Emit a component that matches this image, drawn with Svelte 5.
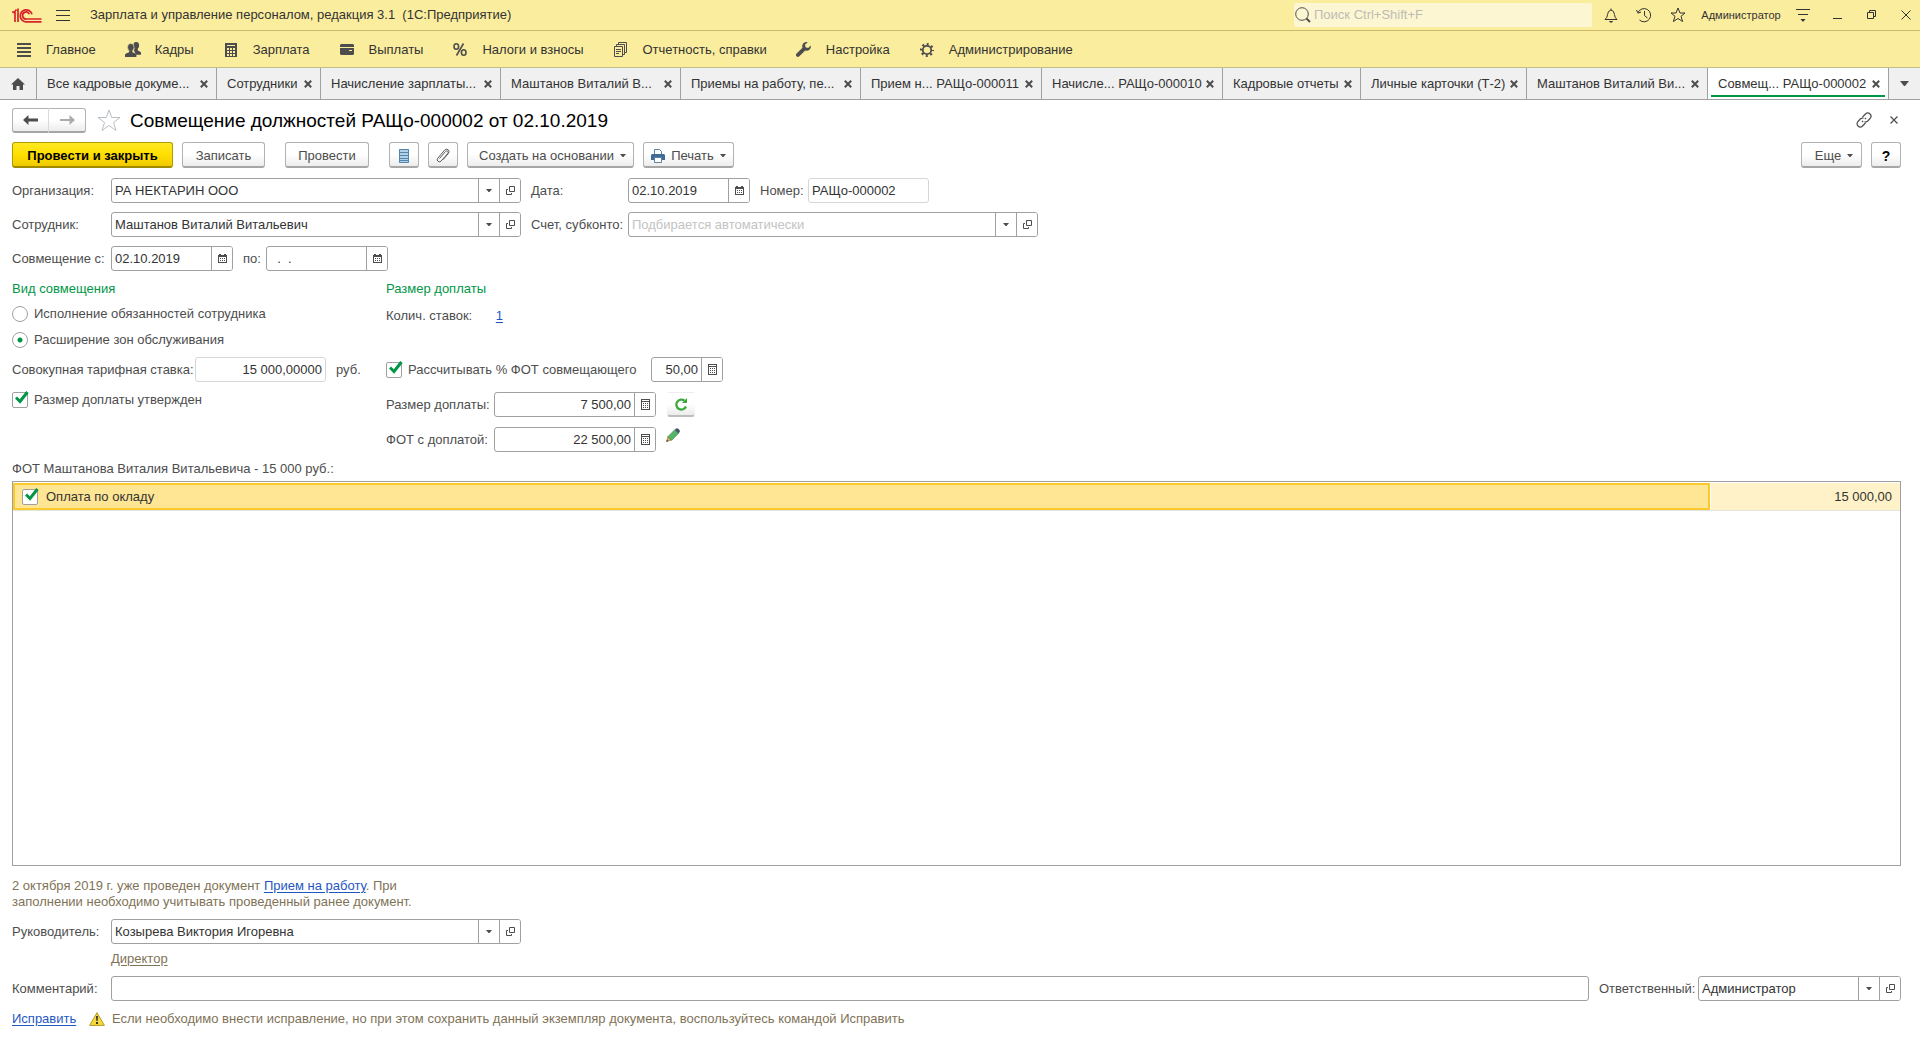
<script>
  const sections = [
    { icon: 'lines', title: 'Главное' },
    { icon: 'people', title: 'Кадры' },
    { icon: 'calcDark', title: 'Зарплата' },
    { icon: 'card', title: 'Выплаты' },
    { icon: 'percent', title: 'Налоги и взносы' },
    { icon: 'docs', title: 'Отчетность, справки' },
    { icon: 'wrench', title: 'Настройка' },
    { icon: 'gear', title: 'Администрирование' }
  ];

  const tabs = [
    { title: 'Все кадровые докуме...', width: 180 },
    { title: 'Сотрудники', width: 104 },
    { title: 'Начисление зарплаты...', width: 180 },
    { title: 'Маштанов Виталий В...', width: 180 },
    { title: 'Приемы на работу, пе...', width: 180 },
    { title: 'Прием н... РАЩо-000011', width: 181 },
    { title: 'Начисле... РАЩо-000010', width: 181 },
    { title: 'Кадровые отчеты', width: 138 },
    { title: 'Личные карточки (Т-2)', width: 166 },
    { title: 'Маштанов Виталий Ви...', width: 181 },
    { title: 'Совмещ... РАЩо-000002', width: 181, active: true }
  ];

  let kind = $state('zones');
  let approved = $state(true);
  let calcPercent = $state(true);
  let salaryRow = $state(true);
</script>

{#snippet icon(name)}
  {#if name === 'lines'}
    <svg width="14" height="14" viewBox="0 0 14 14" fill="#4d4d4d"><path d="M0 0h14v2H0zM0 4h14v2H0zM0 8h14v2H0zM0 12h14v2H0z" /></svg>
  {:else if name === 'people'}
    <svg width="16" height="15" viewBox="0 0 16 15" fill="#4d4d4d"><ellipse cx="11.200" cy="3.400" rx="2.900" ry="3.400" /><path d="M9.800 5.500h3v3l2.500 1.300q.7.400.7 1.300v1.700h-5l-2-4z" /><ellipse cx="5.800" cy="5.300" rx="3.300" ry="3.900" stroke="#fbed9e" stroke-width=".6" /><path d="M4.200 8.300h3.200v1.900l3 1.300q1 .5 1 1.500v2H0v-2q0-1 1-1.500l3.200-1.300z" /></svg>
  {:else if name === 'calcDark'}
    <svg width="12" height="14" viewBox="0 0 12 14"><path fill="#4d4d4d" d="M0 0h12v14H0z" /><path fill="#fbed9e" d="M2 2h8v1H2zM2 5h2v2H2zM5 5h2v2H5zM8 5h2v2H8zM2 8h2v2H2zM5 8h2v2H5zM8 8h2v2H8zM2 11h2v2H2zM5 11h2v2H5zM8 11h2v2H8z" /></svg>
  {:else if name === 'card'}
    <svg width="14" height="11" viewBox="0 0 14 11"><path fill="#4d4d4d" d="M1 0h12l1 1v2H0V1zM0 4h14v6l-1 1H1l-1-1z" /><path fill="#fbed9e" d="M9 6h3v1H9z" /></svg>
  {:else if name === 'percent'}
    <svg width="14" height="13" viewBox="0 0 14 13" fill="none" stroke="#4d4d4d" stroke-width="1.600"><ellipse cx="3.300" cy="3.500" rx="2.300" ry="2.700" /><ellipse cx="10.700" cy="9.500" rx="2.300" ry="2.700" /><path d="M10.500.5l-7 12" /></svg>
  {:else if name === 'docs'}
    <svg width="13" height="15" viewBox="0 0 13 15" fill="none" stroke="#4d4d4d"><path d="M4.500 2.500v-2h8v10h-2M2.500 4.500v-2h8v10h-2M.5 4.500h8v10h-8zM2 7.500h5M2 9.500h5M2 11.500h3" /></svg>
  {:else if name === 'wrench'}
    <svg width="15" height="15" viewBox="0 0 15 15"><path fill="#4d4d4d" d="M10.500 0a4.200 4.200 0 0 0-4 5.700L.6 11.500a1.800 1.800 0 0 0 2.700 2.800L9.200 8.500A4.200 4.200 0 0 0 14.700 3.500L12.200 6 9.500 5.300 9 2.800 11.700.2z" /></svg>
  {:else if name === 'gear'}
    <svg width="14" height="14" viewBox="0 0 14 14" fill="none" stroke="#4d4d4d"><circle cx="7" cy="7" r="4.200" stroke-width="1.800" /><circle cx="7" cy="7" r="5.800" stroke-width="2.400" stroke-dasharray="2 2.555" stroke-dashoffset="1" /></svg>
  {:else if name === 'caret'}
    <svg width="6" height="3" viewBox="0 0 6 3"><path fill="#4d4d4d" d="M0 0h6L3.500 3h-1z" /></svg>
  {:else if name === 'open'}
    <svg width="9" height="9" viewBox="0 0 9 9" fill="none" stroke="#4d4d4d"><path d="M3.500.5h5v5h-5zM2 3.500H.5v5h5V7" /></svg>
  {:else if name === 'calendar'}
    <svg width="9" height="9" viewBox="0 0 9 9"><path fill="#4d4d4d" d="M0 1h1V0h2v1h3V0h2v1h1v8H0z" /><path fill="#fff" d="M1 3h7v5H1z" /><path fill="#4d4d4d" d="M2 4h1v1H2zM4 4h1v1H4zM6 4h1v1H6zM2 6h1v1H2zM4 6h1v1H4zM6 6h1v1H6z" /></svg>
  {:else if name === 'calc'}
    <svg width="9" height="11" viewBox="0 0 9 11"><path fill="#4d4d4d" d="M0 0h9v11H0z" /><path fill="#fff" d="M1 1h7v1H1zM1 3h7v7H1z" /><path fill="#4d4d4d" d="M2 4h1v1H2zM4 4h1v1H4zM6 4h1v1H6zM2 6h1v1H2zM4 6h1v1H4zM6 6h1v1H6zM2 8h1v1H2zM4 8h1v1H4zM6 8h1v1H6z" /></svg>
  {:else if name === 'cross'}
    <svg width="8" height="8" viewBox="0 0 8 8" fill="none" stroke="#4d4d4d" stroke-width="2"><path d="M.8.8l6.400 6.400M7.200.8L.8 7.200" /></svg>
  {/if}
{/snippet}

{#snippet field(id, value, buttons, cls = '', placeholder = '')}
  <div class="field {cls}">
    <input type="text" {id} {value} {placeholder} readonly={cls.includes('readonly')} />
    {#each buttons as b}
      <button type="button" aria-label={b}>{@render icon(b)}</button>
    {/each}
  </div>
{/snippet}

{#snippet tick()}
  <svg class="tick" width="14" height="13" viewBox="0 0 14 13" fill="none" stroke="#009646" stroke-width="3"><path d="M1 6.500l4 4L12.500 1" /></svg>
{/snippet}

<div class="app">
  <header class="titlebar">
    <svg class="logo" width="30" height="15" viewBox="0 0 30 15" fill="none" stroke="#d8232a" stroke-width="1.700"><path d="M0 4h2.500L4.500 1.500M1 4.500h2V14M6 .5V14" /><path d="M20 6.200A6 6 0 1 0 14.500 13.800H29.500" /><path d="M17.300 6.200A3.500 3.500 0 1 0 14.500 11H29.500" /></svg>
    <button type="button" class="plain burger" aria-label="Меню"><svg width="14" height="11" viewBox="0 0 14 11" stroke="#333"><path d="M0 .5h14M0 5.500h14M0 10.500h14" /></svg></button>
    <span class="app-name">Зарплата и управление персоналом, редакция 3.1&nbsp; (1С:Предприятие)</span>
    <label class="search">
      <svg width="16" height="16" viewBox="0 0 16 16" fill="none" stroke="#4d4d4d"><circle cx="7" cy="7" r="6.300" /><path d="M11.500 11.500l3.500 3.500" stroke-width="2" /></svg>
      <input type="search" placeholder="Поиск Ctrl+Shift+F" aria-label="Поиск" />
    </label>
    <div class="tools">
      <button type="button" class="plain" aria-label="Оповещения"><svg width="14" height="15" viewBox="0 0 14 15" fill="none" stroke="#333"><path d="M7 .5v1.500M1 11.500Q3.500 9.500 3.500 6.500 4 2.500 7 2q3 .5 3.500 4.500 0 3 2.500 5z" /><path d="M5 13h4l-1 1.500H6z" fill="#333" stroke="none" /></svg></button>
      <button type="button" class="plain" aria-label="История"><svg width="16" height="16" viewBox="0 0 16 16" fill="none" stroke="#333"><path d="M2 5.500A6.600 6.600 0 1 1 3.500 13M.5 3l1.500 3.200L5 5M8.500 4v4.500l3 2.500" /></svg></button>
      <button type="button" class="plain" aria-label="Избранное"><svg width="16" height="16" viewBox="0 0 16 16" fill="none" stroke="#333"><path d="M8 1l2 5h5l-4 3.300 1.600 5.200L8 11.500l-4.600 3L5 9.300 1 6h5z" /></svg></button>
      <button type="button" class="plain user">Администратор</button>
      <button type="button" class="plain" aria-label="Сервис"><svg width="14" height="13" viewBox="0 0 14 13"><path d="M0 .5h14M2 5.500h10" stroke="#333" /><path d="M4.500 10h5L7.500 12.500h-1z" fill="#333" /></svg></button>
    </div>
    <div class="window">
      <button type="button" class="plain" aria-label="Свернуть"><svg width="10" height="10" viewBox="0 0 10 10"><path d="M0 8.500h9" stroke="#333" /></svg></button>
      <button type="button" class="plain" aria-label="Развернуть"><svg width="10" height="10" viewBox="0 0 10 10" fill="none" stroke="#333"><path d="M2.500 2.500v-2h6v6h-2M.5 2.500h6v6h-6z" /></svg></button>
      <button type="button" class="plain" aria-label="Закрыть"><svg width="10" height="10" viewBox="0 0 10 10" fill="none" stroke="#333"><path d="M.5.5l9 9M9.500.5l-9 9" /></svg></button>
    </div>
  </header>

  <nav class="sections">
    {#each sections as s}
      <a href="#section"><span class="section-icon">{@render icon(s.icon)}</span>{s.title}</a>
    {/each}
  </nav>

  <div class="tabs">
    <button type="button" class="plain home" aria-label="Начальная страница"><svg width="14" height="12" viewBox="0 0 14 12" fill="#4d4d4d"><path d="M7 0l7 6.500h-2V12H8.500V8h-3v4H2V6.500H0z" /></svg></button>
    {#each tabs as t}
      <div class="tab" class:active={t.active} style="flex-basis: {t.width}px">
        <a href="#tab">{t.title}</a>
        <button type="button" class="plain" aria-label="Закрыть вкладку">{@render icon('cross')}</button>
      </div>
    {/each}
    <button type="button" class="plain all-tabs" aria-label="Все вкладки"><svg width="9" height="5" viewBox="0 0 9 5"><path fill="#4d4d4d" d="M0 0h9L5 5H4z" /></svg></button>
  </div>

  <main>
    <div class="heading">
      <div class="history">
        <button type="button" aria-label="Назад"><svg width="15" height="10" viewBox="0 0 15 10" fill="#4d4d4d"><path d="M0 5l5.500-5v3.500H15v3H5.500V10z" /></svg></button>
        <button type="button" aria-label="Вперед"><svg width="15" height="10" viewBox="0 0 15 10" fill="#ababab"><path d="M15 5L9.500 0v4H0v2h9.500v4z" /></svg></button>
      </div>
      <button type="button" class="plain star" aria-label="В избранное"><svg width="24" height="22" viewBox="0 0 24 22" fill="none" stroke="#b9bec4"><path d="M12 1l2.700 7.500H23l-6.500 5 2.500 8-7-5-7 5 2.500-8L1 8.500h8.300z" /></svg></button>
      <h1>Совмещение должностей РАЩо-000002 от 02.10.2019</h1>
      <button type="button" class="plain link" aria-label="Получить ссылку"><svg width="16" height="16" viewBox="0 0 16 16" fill="none" stroke="#4d4d4d" stroke-width="1.200"><path d="M6.500 5L9.500 2a3.100 3.100 0 0 1 4.500 4.500L11.500 9.200Q10 10.300 8.500 9.800M9.500 11L6.500 14A3.100 3.100 0 0 1 2 9.500L4.500 6.800Q6 5.700 7.500 6.200M6 10l1.200-1.200M8.800 7.200L10 6" /></svg></button>
      <button type="button" class="plain close" aria-label="Закрыть"><svg width="8" height="8" viewBox="0 0 8 8" fill="none" stroke="#4d4d4d" stroke-width="1.200"><path d="M.5.5l7 7M7.500.5l-7 7" /></svg></button>
    </div>

    <div class="toolbar">
      <button type="button" class="btn primary">Провести и закрыть</button>
      <button type="button" class="btn save">Записать</button>
      <button type="button" class="btn post">Провести</button>
      <button type="button" class="btn square" aria-label="Движения документа"><svg width="10" height="14" viewBox="0 0 10 14"><path fill="#b4d0e6" d="M0 0h10v14H0z" /><path d="M.5.5h9v13h-9zM1 3.500h8M1 6.500h8M1 9.500h8M1 11.500h8" fill="none" stroke="#5685ab" /></svg></button>
      <button type="button" class="btn square clip" aria-label="Присоединенные файлы"><svg width="14" height="15" viewBox="0 0 14 15" fill="none" stroke="#5c5c5c"><path d="M3.500 10.500l6-7q1.200-1.200 2.200-.3t0 2.300l-6.700 7.700q-1.500 1.300-3 .1t-.3-3L8.500 2.200q1.800-1.800 3.700-.4 1.700 1.600.2 3.700L7 11.700" /></svg></button>
      <button type="button" class="btn create">Создать на основании {@render icon('caret')}</button>
      <button type="button" class="btn print"><svg width="14" height="14" viewBox="0 0 14 14"><path d="M3.500 5V.5h5l2 2V5" fill="#fff" stroke="#5f7f9e" /><path d="M1 5h12l1 1v5H0V6z" fill="#3f6c97" /><path d="M3.500 8.500h7v5h-7z" fill="#fff" stroke="#5f7f9e" /></svg>Печать {@render icon('caret')}</button>
      <button type="button" class="btn more">Еще {@render icon('caret')}</button>
      <button type="button" class="btn square help">?</button>
    </div>

    <div class="rows">
      <div class="row">
        <label class="caption" for="org">Организация:</label>
        {@render field('org', 'РА НЕКТАРИН ООО', ['caret', 'open'], 'wide')}
        <label class="caption second" for="date">Дата:</label>
        {@render field('date', '02.10.2019', ['calendar'], 'date')}
        <label class="number" for="num">Номер:</label>
        {@render field('num', 'РАЩо-000002', [], 'readonly doc-number')}
      </div>
      <div class="row">
        <label class="caption" for="emp">Сотрудник:</label>
        {@render field('emp', 'Маштанов Виталий Витальевич', ['caret', 'open'], 'wide')}
        <label class="caption second" for="acc">Счет, субконто:</label>
        {@render field('acc', '', ['caret', 'open'], 'wide', 'Подбирается автоматически')}
      </div>
      <div class="row">
        <label class="caption" for="from">Совмещение с:</label>
        {@render field('from', '02.10.2019', ['calendar'], 'date')}
        <label class="until" for="to">по:</label>
        {@render field('to', '\u00a0\u00a0.\u00a0\u00a0.', ['calendar'], 'date')}
      </div>
    </div>

    <div class="columns">
      <section class="kind">
        <h2>Вид совмещения</h2>
        <div class="radios">
          <label><input type="radio" name="kind" value="duties" bind:group={kind} />Исполнение обязанностей сотрудника</label>
          <label><input type="radio" name="kind" value="zones" bind:group={kind} />Расширение зон обслуживания</label>
        </div>
        <div class="row">
          <label class="rate" for="rate">Совокупная тарифная ставка:</label>
          {@render field('rate', '15 000,00000', [], 'readonly numeric rate-value')}
          <span class="unit">руб.</span>
        </div>
        <label class="check approved"><span class="box"><input type="checkbox" bind:checked={approved} />{#if approved}{@render tick()}{/if}</span>Размер доплаты утвержден</label>
      </section>

      <section class="amount">
        <h2>Размер доплаты</h2>
        <p class="count">Колич. ставок: <a href="#count">1</a></p>
        <div class="row">
          <label class="check percent"><span class="box"><input type="checkbox" bind:checked={calcPercent} />{#if calcPercent}{@render tick()}{/if}</span>Рассчитывать % ФОТ совмещающего</label>
          {@render field('percent', '50,00', ['calc'], 'numeric short')}
        </div>
        <div class="row">
          <label class="sum" for="sum">Размер доплаты:</label>
          {@render field('sum', '7 500,00', ['calc'], 'numeric money')}
          <button type="button" class="refresh" aria-label="Пересчитать"><svg width="13" height="13" viewBox="0 0 13 13"><path d="M11 8.500A5 5 0 1 1 9.500 2.700" fill="none" stroke="#38a838" stroke-width="2.200" /><path d="M12 0v5H7z" fill="#38a838" /></svg></button>
        </div>
        <div class="row">
          <label class="sum" for="total">ФОТ с доплатой:</label>
          {@render field('total', '22 500,00', ['calc'], 'numeric money')}
          <button type="button" class="plain edit" aria-label="Изменить"><svg width="14" height="14" viewBox="0 0 14 14"><path d="M.5 13.500L2 8.500l3.500 3.500z" fill="#e9a94b" stroke="#8a6a3d" stroke-width=".6" /><path d="M1.800 8.700l7-7 3.700 3.700-7 7z" fill="#54b365" stroke="#3d8b4c" stroke-width=".6" /><path d="M8.800 1.700l1.300-1.300Q11.300-.2 12.800 1.200T13.700 4.100L12.400 5.400z" fill="#44546a" /><path d="M.3 13.700l.7-2 1.400 1.300z" fill="#333" /></svg></button>
        </div>
      </section>
    </div>

    <p class="table-title">ФОТ Маштанова Виталия Витальевича - 15 000 руб.:</p>
    <div class="grid">
      <table>
        <tbody>
          <tr>
            <td class="current"><label class="check"><span class="box"><input type="checkbox" bind:checked={salaryRow} />{#if salaryRow}{@render tick()}{/if}</span>Оплата по окладу</label></td>
            <td class="value">15 000,00</td>
          </tr>
        </tbody>
      </table>
    </div>

    <p class="note">2 октября 2019 г. уже проведен документ <a href="#doc">Прием на работу</a>. При<br />заполнении необходимо учитывать проведенный ранее документ.</p>

    <div class="row manager">
      <label class="caption" for="manager">Руководитель:</label>
      {@render field('manager', 'Козырева Виктория Игоревна', ['caret', 'open'], 'wide')}
    </div>
    <a class="position" href="#position">Директор</a>
    <div class="row comment">
      <label class="caption" for="comment">Комментарий:</label>
      {@render field('comment', '', [], 'grow')}
      <label class="responsible" for="resp">Ответственный:</label>
      {@render field('resp', 'Администратор', ['caret', 'open'], 'person')}
    </div>
    <div class="fix">
      <a href="#fix">Исправить</a>
      <svg width="16" height="14" viewBox="0 0 16 14"><path d="M8 .7L15.400 13.400H.6z" fill="#f5d93a" stroke="#b59b2a" stroke-linejoin="round" /><path d="M7 4h2l-.4 5H7.400zM7 10h2v2H7z" fill="#333" /></svg>
      <span>Если необходимо внести исправление, но при этом сохранить данный экземпляр документа, воспользуйтесь командой Исправить</span>
    </div>
  </main>
</div>

<style>
  :global(body) { background: #fff; }
  .app {
    display: flex;
    flex-direction: column;
    min-height: 100vh;
    font: 13px/16px 'Liberation Sans', Arial, sans-serif;
    color: #4d4d4d;
  }
  .app, .app * { box-sizing: border-box; }
  button, input { font: inherit; color: inherit; margin: 0; }
  button { cursor: pointer; }
  svg { display: block; flex: none; }
  p, h1, h2 { margin: 0; font-size: 13px; font-weight: normal; }
  a { color: #1f57c3; text-underline-offset: 2px; }
  .plain { display: flex; align-items: center; justify-content: center; padding: 0; border: 0; background: none; }

  .titlebar { display: flex; align-items: center; height: 31px; padding: 0 9px 0 12px; background: #fbed9e; border-bottom: 1px solid #c9ba6c; color: #333; }
  .burger { margin: 0 20px 0 14px; }
  .app-name { flex: 1; white-space: nowrap; }
  .search { display: flex; align-items: center; gap: 3px; width: 298px; height: 24px; padding-left: 1px; border-radius: 2px; background: #fdf6d2; }
  .search input { flex: 1; min-width: 0; padding: 0; border: 0; outline: 0; background: none; }
  .search input::placeholder { color: #bcbcb4; opacity: 1; }
  .tools { display: flex; align-items: center; gap: 18px; margin-left: 12px; }
  .user { font-size: 11px; width: 82px; margin: 0 -4px; }
  .window { display: flex; gap: 24px; margin-left: 23px; }

  .sections { display: flex; align-items: center; gap: 30px; height: 37px; padding: 1px 0 0 17px; background: #fbed9e; border-bottom: 1px solid #c2bf88; }
  .sections a { display: flex; align-items: center; gap: 15px; color: #333; text-decoration: none; white-space: nowrap; }
  .section-icon { display: flex; justify-content: center; width: 14px; }

  .tabs { display: flex; height: 32px; background: #f0f0f0; border-bottom: 1px solid #a0a0a0; }
  .home { flex: none; width: 37px; border-right: 1px solid #a0a0a0; }
  .tab { display: flex; align-items: center; justify-content: space-between; flex: 0 1 auto; min-width: 0; padding: 0 8px 0 10px; border-right: 1px solid #a0a0a0; }
  .tab a { overflow: hidden; color: #333; text-decoration: none; white-space: nowrap; }
  .tab.active { position: relative; background: #fff; }
  .tab.active::after { content: ''; position: absolute; left: 3px; right: 3px; bottom: 2px; height: 2px; background: #009646; }
  .all-tabs { flex: 1; }

  main { display: flex; flex: 1; flex-direction: column; padding: 8px 19px 11px 12px; }

  .heading { display: flex; align-items: center; height: 24px; }
  .history { display: flex; }
  .history button, .btn, .refresh {
    display: flex; align-items: center; justify-content: center; padding: 0;
    border: 1px solid #b3b3b3; border-bottom: 2px solid #a6a6a6; border-radius: 3px;
    background: linear-gradient(#fff 50%, #ececec); white-space: nowrap;
  }
  .history button { width: 37px; height: 25px; }
  .history button:first-child { border-right-color: #d9d9d9; border-radius: 3px 0 0 3px; }
  .history button:last-child { border-left: 0; border-radius: 0 3px 3px 0; }
  .star { margin: 0 9px 0 11px; }
  h1 { flex: 1; padding-top: 2px; font-size: 19px; line-height: 24px; color: #000; white-space: nowrap; }
  .close { margin: 0 3px 0 18px; }

  .toolbar { display: flex; gap: 9px; margin-top: 10px; }
  .btn { height: 26px; gap: 6px; padding-top: 2px; }
  .primary { width: 161px; border-color: #b39a00; border-bottom-color: #a08a00; background: linear-gradient(#ffe924, #ffdf00 50%, #f0ca00); color: #000; font-weight: bold; }
  .save { width: 83px; }
  .post { width: 84px; margin: 0 11px; }
  .square { width: 30px; }
  .create { width: 167px; padding-left: 4px; }
  .print { width: 91px; }
  .more { width: 61px; margin-left: auto; padding-left: 5px; }
  .help { color: #000; font-weight: bold; font-size: 14px; }

  .rows { display: flex; flex-direction: column; gap: 9px; margin-top: 10px; }
  .row { display: flex; align-items: center; }
  .row > label { flex: none; white-space: nowrap; }
  .caption { width: 99px; }
  .second { width: 107px; padding-left: 10px; }
  .number { width: 58px; padding-left: 10px; }
  .until { width: 33px; padding-left: 10px; }

  .field { display: flex; flex: none; height: 25px; border: 1px solid #a0a0a0; border-radius: 3px; background: #fff; overflow: hidden; color: #333; }
  .field input { flex: 1; min-width: 0; padding: 0 3px; border: 0; outline: 0; background: none; }
  .field input::placeholder { color: #c3c3c3; opacity: 1; }
  .field button { display: flex; align-items: center; justify-content: center; width: 21px; padding: 0; border: 0; border-left: 1px solid #a0a0a0; background: #fff; }
  .wide { width: 410px; }
  .date { width: 122px; }
  .doc-number { width: 121px; }
  .rate-value { width: 131px; }
  .short { width: 72px; }
  .money { width: 162px; }
  .person { width: 203px; }
  .grow { flex: 1; }
  .readonly { border-color: #d6d6d6; }
  .numeric input { text-align: right; }

  .columns { display: flex; margin-top: 10px; }
  .kind { width: 374px; }
  h2 { color: #009646; line-height: 16px; }
  .radios { margin: 4px 0 4px; }
  .radios label { display: flex; align-items: center; gap: 6px; height: 26px; }
  input[type='radio'] { appearance: none; width: 16px; height: 16px; border: 1px solid #a0a0a0; border-radius: 50%; background: #fff; }
  input[type='radio']:checked { background: radial-gradient(circle, #009646 2px, #fff 3px); }
  .rate { width: 183px; }
  .unit { margin-left: 10px; }
  .check { display: flex; align-items: center; gap: 6px; white-space: nowrap; }
  .approved { margin-top: 10px; }
  .box { position: relative; display: flex; }
  .box input { appearance: none; width: 16px; height: 16px; border: 1px solid #a0a0a0; border-radius: 2px; background: #fff; }
  .tick { position: absolute; left: 3px; top: -1px; pointer-events: none; }

  .count { margin: 11px 0 33px; }
  .count a { margin-left: 20px; }
  .amount .row + .row { margin-top: 10px; }
  .percent { width: 265px; }
  .sum { width: 108px; }
  .refresh { width: 28px; height: 25px; margin: 0 0 0 11px; border-color: transparent; border-bottom-color: #bdbdbd; }
  .edit { align-self: flex-start; margin: 1px 0 0 10px; }

  .table-title { margin: 9px 0 4px; }
  .grid { flex: 1; min-height: 120px; border: 1px solid #a0a0a0; }
  table { width: 100%; border-collapse: separate; border-spacing: 0; border-top: 1px solid #fff; border-bottom: 1px solid #e3e3e3; }
  td { height: 27px; padding: 0; color: #333; }
  .current { border: 2px solid #fcc92c; background: #ffe694; padding-left: 7px; }
  .current .check { gap: 8px; }
  .value { width: 190px; padding-right: 8px; border-left: 1px solid #fff; background: #fff2c8; text-align: right; }

  .note { margin: 12px 0 9px; color: #7f7357; }
  .position { align-self: flex-start; margin: 7px 0 9px 99px; color: #7f7357; }
  .responsible { width: 109px; padding-left: 10px; }
  .fix { display: flex; align-items: center; margin-top: 10px; color: #7f7357; }
  .fix a { width: 77px; }
  .fix svg { margin-right: 7px; }
</style>
